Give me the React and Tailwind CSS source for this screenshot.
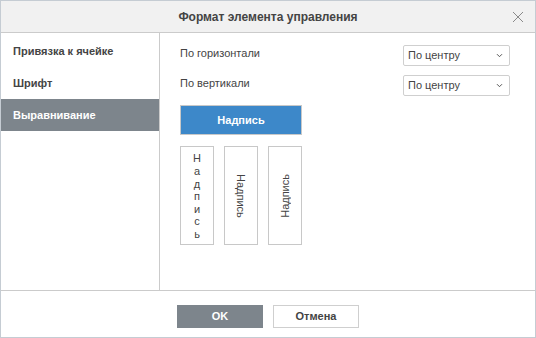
import React from "react";

function Chevron() {
  return (
    <svg width="7" height="5" viewBox="0 0 7 5" className="ml-auto">
      <path d="M1 1.2 L3.5 3.7 L6 1.2" fill="none" stroke="#555" strokeWidth="1" />
    </svg>
  );
}

function Select() {
  return (
    <div className="w-[107px] h-[21px] border border-[#cfcfcf] rounded-[2px] bg-white flex items-center pl-[4px] pr-[6px] text-[11px] text-[#444]">
      <span>По центру</span>
      <Chevron />
    </div>
  );
}

export default function App() {
  const font = { fontFamily: '"Liberation Sans", Arial, sans-serif' };
  return (
    <div style={font} className="w-[536px] h-[338px] border border-[#c5ccd3] bg-white flex flex-col text-[#444] overflow-hidden">
      <div className="h-[32px] shrink-0 bg-[#f1f1f1] border-b border-[#cbcbcb] flex items-center justify-center relative">
        <span className="text-[12px] font-bold text-[#444]">Формат элемента управления</span>
        <svg width="12" height="12" viewBox="0 0 12 12" className="absolute right-[11px] top-[10px]">
          <path d="M1 1 L11 11 M11 1 L1 11" stroke="#8a8a8a" strokeWidth="1" />
        </svg>
      </div>
      <div className="h-[258px] shrink-0 flex border-b border-[#cbcbcb]">
        <div className="w-[159px] shrink-0 border-r border-[#cbcbcb] pt-[1px] text-[11px] font-bold">
          <div className="h-[33px] flex items-center pl-[12px] pt-[1px]">Привязка к ячейке</div>
          <div className="h-[32px] flex items-center pl-[12px]">Шрифт</div>
          <div className="h-[32px] flex items-center pl-[12px] bg-[#7d858c] text-white">Выравнивание</div>
        </div>
        <div className="flex-1 pl-[20px] pr-[25px] pt-[12px] text-[11px]">
          <div className="flex items-start">
            <span className="leading-[14px] pt-[1px]">По горизонтали</span>
            <div className="ml-auto"><Select /></div>
          </div>
          <div className="flex items-start mt-[9px]">
            <span className="leading-[14px] pt-[1px]">По вертикали</span>
            <div className="ml-auto"><Select /></div>
          </div>
          <div className="mt-[9px]">
            <div className="w-[122px] h-[30px] bg-[#3d88c9] border border-[#c8c8c8] flex items-center justify-center text-white font-bold text-[11px]">
              Надпись
            </div>
            <div className="flex gap-[10px] mt-[11px]">
              <div className="w-[34px] h-[99px] border border-[#c8c8c8] flex flex-col items-center justify-center text-[11px] leading-[12.6px] pt-[2px]">
                {"Надпись".split("").map((c, i) => (
                  <span key={i}>{c}</span>
                ))}
              </div>
              <div className="w-[34px] h-[99px] border border-[#c8c8c8] flex items-center justify-center">
                <span className="[writing-mode:vertical-rl] text-[11px] leading-[14px]">Надпись</span>
              </div>
              <div className="w-[34px] h-[99px] border border-[#c8c8c8] flex items-center justify-center">
                <span className="[writing-mode:vertical-rl] rotate-180 text-[11px] leading-[14px]">Надпись</span>
              </div>
            </div>
          </div>
        </div>
      </div>
      <div className="flex-1 flex justify-center gap-[10px] pt-[14px]">
        <div className="w-[86px] h-[23px] bg-[#7d858c] text-white font-bold text-[11px] flex items-center justify-center">OK</div>
        <div className="w-[86px] h-[23px] bg-white border border-[#cfcfcf] text-[#444] font-bold text-[11px] flex items-center justify-center">Отмена</div>
      </div>
    </div>
  );
}
